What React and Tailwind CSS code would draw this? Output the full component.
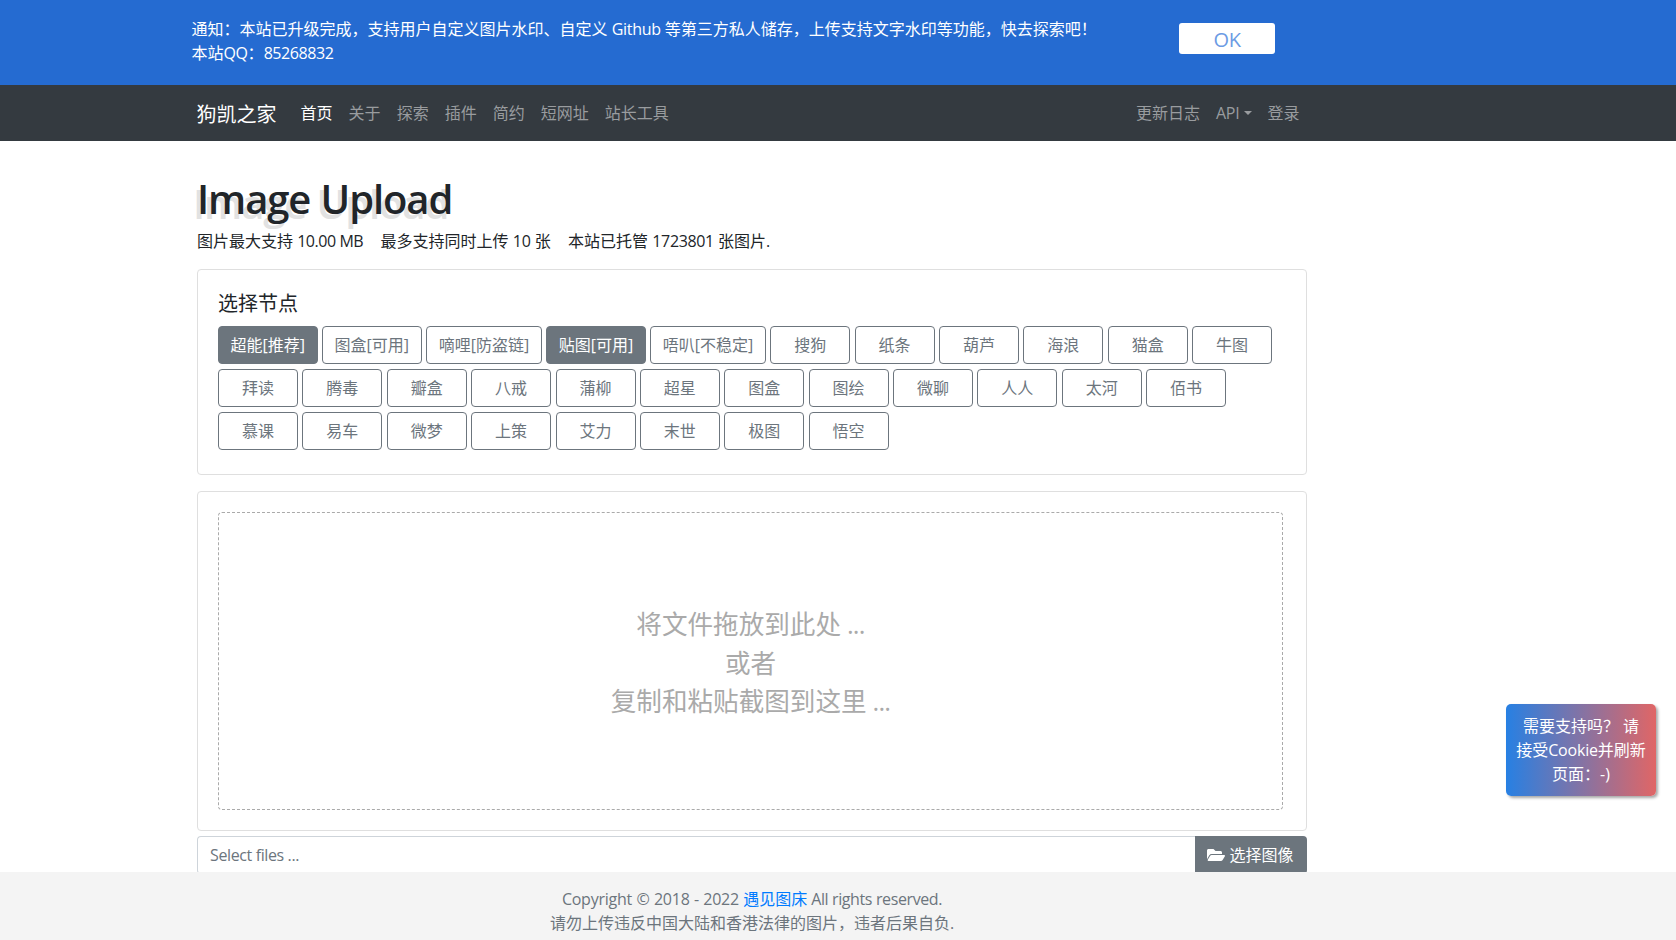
import React from "react";

const leftLinks = ["关于", "探索", "插件", "简约", "短网址", "站长工具"];

const nodeRows = [
  ["超能[推荐]", "图盒[可用]", "嘀哩[防盗链]", "贴图[可用]", "唔叭[不稳定]", "搜狗", "纸条", "葫芦", "海浪", "猫盒", "牛图"],
  ["拜读", "腾毒", "瓣盒", "八戒", "蒲柳", "超星", "图盒", "图绘", "微聊", "人人", "太河", "佰书"],
  ["慕课", "易车", "微梦", "上策", "艾力", "末世", "极图", "悟空"],
];

const activeNodes = ["超能[推荐]", "贴图[可用]"];

function nodeWidth(label) {
  if (label.length === 2) return "w-20";
  return label.length === 6 ? "w-[99.66px]" : "w-[115.66px]";
}

function NodeButton({ label }) {
  const tone = activeNodes.includes(label)
    ? "bg-[#6c757d] text-white"
    : "bg-white text-[#6c757d]";
  return (
    <button
      className={`h-[38px] shrink-0 rounded border border-[#6c757d] text-center leading-6 whitespace-nowrap ${nodeWidth(label)} ${tone}`}
    >
      {label}
    </button>
  );
}

function Notice() {
  return (
    <div className="h-[85px] shrink-0 bg-[#256bd1] text-white">
      <div className="ml-[191.5px] flex items-start">
        <p className="w-[987.5px] pt-[17px] leading-6">
          通知：本站已升级完成，支持用户自定义图片水印、自定义{" "}
          <span className="tracking-[-0.3px]">Github</span> 等第三方私人储存，上传支持文字水印等功能，快去探索吧！
          <br />
          本站<span className="tracking-[-0.4px]">QQ</span>：<span className="tracking-[-0.4px]">85268832</span>
        </p>
        <button className="mt-[23px] h-[31px] w-24 rounded-[3px] bg-white pt-[2px] text-xl leading-[29px] tracking-[-0.5px] text-[#6c9be4]">
          OK
        </button>
      </div>
    </div>
  );
}

function Navbar() {
  return (
    <nav className="h-14 shrink-0 bg-[#343a40] text-[#999c9f]">
      <div className="ml-[196.6px] flex h-full w-[1111px] items-center">
        <a className="mr-4 w-20 pt-[4px] text-xl leading-[30px] text-white">狗凯之家</a>
        <a className="px-2 text-white">首页</a>
        {leftLinks.map((item) => (
          <a key={item} className="px-2">{item}</a>
        ))}
        <div className="ml-auto flex items-center">
          <a className="px-2">更新日志</a>
          <a className="flex items-center px-2">
            <span className="tracking-[-0.2px]">API</span>
            <span className="ml-1 border-x-[4.8px] border-t-[4.8px] border-x-transparent border-t-[#999c9f]" />
          </a>
          <a className="px-2">登录</a>
        </div>
      </div>
    </nav>
  );
}

export default function App() {
  return (
    <div
      lang="zh-CN"
      className="relative flex h-[940px] w-full flex-col overflow-hidden bg-white font-['Open_Sans','Noto_Sans_CJK_SC',sans-serif] text-base leading-6 text-[#212529]"
    >
      <Notice />
      <Navbar />

      <main className="ml-[197px] min-h-0 w-[1110px] flex-1 overflow-visible pt-[34px]">
        <h1 className="mb-[6px] h-12 text-[40px] leading-[48px] font-semibold tracking-[-1.1px] whitespace-nowrap [word-spacing:1px] [text-shadow:-4px_5px_0_#e2e2e2]">
          Image Upload
        </h1>
        <p className="mb-4 flex gap-[17.3px] whitespace-nowrap">
          <span>图片最大支持 <span className="tracking-[-0.45px]">10.00 MB</span></span>
          <span>最多支持同时上传 <span className="tracking-[-0.2px]">10</span> 张</span>
          <span>本站已托管 <span className="tracking-[-0.35px]">1723801</span> 张图片.</span>
        </p>

        <section className="h-[206px] rounded border border-[#dfdfdf] px-5 pt-[22px]">
          <h2 className="mb-[10px] text-xl leading-6">选择节点</h2>
          <div className="flex flex-col gap-[5px]">
            {nodeRows.map((row, i) => (
              <div key={i} className="flex gap-[4.39px]">
                {row.map((label) => (
                  <NodeButton key={label} label={label} />
                ))}
              </div>
            ))}
          </div>
        </section>

        <section className="mt-4 h-[340px] rounded border border-[#dfdfdf] p-5">
          <div className="flex h-[298px] w-[1065px] flex-col items-center justify-center rounded border border-dashed border-[#aaa] pt-[6px] text-[25.6px] leading-[38.4px] text-[#aaa]">
            <p>将文件拖放到此处<span className="tracking-[-0.8px]"> ...</span></p>
            <p>或者</p>
            <p>复制和粘贴截图到这里<span className="tracking-[-0.8px]"> ...</span></p>
          </div>
        </section>

        <div className="mt-[5px] flex h-[38px]">
          <div className="flex-1 rounded-l border border-r-0 border-[#ced4da] px-3 py-[6px] tracking-[-0.38px] text-[#6c757d]">
            Select files ...
          </div>
          <button className="flex w-28 items-center justify-center gap-1 rounded-r bg-[#6c757d] pr-px text-white">
            <svg viewBox="0 0 576 512" className="h-4 w-[18px]" fill="currentColor">
              <path d="M572.7 292.1 500.300 416.200A64 64 0 0 1 445 448H45c-18.500 0-30.100-20.100-20.700-36.100l72.400-124.200A64 64 0 0 1 152 256h400c18.500 0 30 20.100 20.700 36.100zM152 224h328v-48c0-26.500-21.500-48-48-48H272l-64-64H48C21.500 64 0 85.500 0 112v278l69.100-118.400A96.300 96.300 0 0 1 152 224z" />
            </svg>
            选择图像
          </button>
        </div>
      </main>

      <footer className="z-10 h-[68px] shrink-0 bg-[#f4f4f4] pt-[15px] text-[#6c757d]">
        <div className="ml-[197px] w-[1110px] text-center">
          <p>
            <span className="tracking-[-0.24px] [word-spacing:0.5px]">Copyright © 2018 - 2022 </span>
            <a className="text-[#007bff]">遇见图床</a>
            <span className="tracking-[-0.38px]"> All rights reserved.</span>
          </p>
          <p>请勿上传违反中国大陆和香港法律的图片，违者后果自负.</p>
        </div>
      </footer>

      <aside className="absolute top-[704px] left-[1506px] h-[92px] w-[150px] rounded-[5px] bg-linear-to-r/srgb from-[#2780e3] to-[#e06666] py-[10px] text-center whitespace-nowrap text-white shadow-[2px_2px_3px_rgba(0,0,0,0.35)]">
        <p>需要支持吗？ 请</p>
        <p>接受<span className="tracking-[-0.2px]">Cookie</span>并刷新</p>
        <p>页面：-)</p>
      </aside>
    </div>
  );
}
